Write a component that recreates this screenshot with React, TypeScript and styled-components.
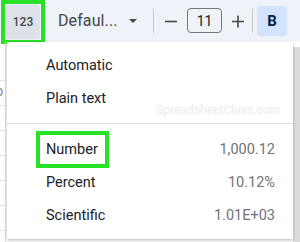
import React from "react";
import styled, { createGlobalStyle } from "styled-components";

const Global = createGlobalStyle`
  html, body { margin: 0; padding: 0; background: #ffffff; }
  body { font-family: Roboto, "Liberation Sans", Arial, sans-serif; }
`;

const Page = styled.div`
  position: relative;
  width: 300px;
  height: 242px;
  overflow: hidden;
  background: #ffffff;
`;

const Toolbar = styled.div`
  display: flex;
  align-items: center;
  height: 41px;
  background: #eef2f9;
  padding-left: 1px;
`;

const Highlight = styled.div`
  box-sizing: border-box;
  border: 4px solid #26e126;
  display: flex;
`;

const ToolHighlight = styled(Highlight)`
  margin-top: 2px;
  padding: 1px;
`;

const FormatBtn = styled.div`
  width: 34px;
  height: 34px;
  background: #dde2ea;
  border-radius: 3px;
  display: flex;
  align-items: center;
  justify-content: center;
  font-size: 12px;
  font-weight: 500;
  color: #444746;
`;

const FontSelect = styled.div`
  display: flex;
  align-items: center;
  margin-left: 13px;
  width: 95px;
  font-size: 16px;
  color: #444746;
  letter-spacing: 0.1px;
`;

const Caret = styled.span`
  margin-left: auto;
  width: 0;
  height: 0;
  border-left: 4px solid transparent;
  border-right: 4px solid transparent;
  border-top: 4px solid #444746;
  margin-right: 16px;
`;

const Sep = styled.div`
  width: 1px;
  height: 24px;
  background: #c7c7c7;
`;

const Step = styled.div<{ $lead?: number }>`
  width: 28px;
  margin-left: ${(p) => p.$lead ?? 0}px;
  display: flex;
  align-items: center;
  justify-content: center;
  color: #444746;
`;

const SizeBox = styled.div`
  box-sizing: border-box;
  width: 35px;
  height: 25px;
  border: 1px solid #747775;
  border-radius: 4px;
  display: flex;
  align-items: center;
  justify-content: center;
  font-size: 14px;
  color: #1f1f1f;
  margin: 0 2px;
`;

const BoldBtn = styled.div`
  margin-left: 4px;
  width: 30px;
  height: 30px;
  border-radius: 4px;
  background: #d3e3fd;
  display: flex;
  align-items: center;
  justify-content: center;
  font-weight: 700;
  font-size: 15px;
  color: #041e49;
`;

const Sheet = styled.div`
  display: flex;
  height: 201px;
`;

const RowHeaders = styled.div`
  width: 5px;
  border-right: 1px solid #e1e1e1;
  padding-top: 15px;
  display: flex;
  flex-direction: column;
`;

const SheetRow = styled.div`
  height: 24px;
  border-bottom: 1px solid #e1e1e1;
  font-size: 11px;
  color: #6d6d6d;
  line-height: 24px;
  overflow: hidden;
  text-indent: -4px;
`;

const Cells = styled.div`
  flex: 1;
`;

const ScrollStrip = styled.div`
  width: 7px;
  margin-top: 6px;
  background: #dcdcdc;
`;

const Menu = styled.div`
  position: absolute;
  left: 7px;
  top: 42px;
  width: 286px;
  height: 197px;
  box-sizing: border-box;
  background: #ffffff;
  box-shadow: 0 1px 3px rgba(0, 0, 0, 0.3);
  padding-top: 7px;
  display: flex;
  flex-direction: column;
`;

const Item = styled.div`
  height: 33px;
  display: flex;
  align-items: center;
  padding-left: 39px;
  padding-right: 18px;
  font-size: 14.5px;
  color: #202124;
`;

const NumberItem = styled(Item)`
  padding-left: 29px;
`;

const Value = styled.span`
  margin-left: auto;
  color: #6f7378;
  font-size: 14.5px;
`;

const Divider = styled.div`
  position: relative;
  height: 18px;
  display: flex;
  align-items: center;
`;

const Line = styled.div`
  width: 100%;
  height: 1px;
  margin-top: -1px;
  background: #dadce0;
`;

const Watermark = styled.span`
  position: absolute;
  right: 13px;
  top: -12px;
  font-size: 12px;
  font-weight: 500;
  color: #eeeef0;
`;

const NumberLabel = styled.span`
  padding: 0 7px 0 6px;
  line-height: 29px;
`;

const Minus = () => (
  <svg width="14" height="14" viewBox="0 0 14 14">
    <path d="M1 7.5h12" stroke="#444746" strokeWidth="1.6" />
  </svg>
);

const Plus = () => (
  <svg width="14" height="14" viewBox="0 0 14 14">
    <path d="M1 7.5h12M7 1.5v12" stroke="#444746" strokeWidth="1.6" />
  </svg>
);

export default function App() {
  return (
    <Page>
      <Global />
      <Toolbar>
        <ToolHighlight>
          <FormatBtn>123</FormatBtn>
        </ToolHighlight>
        <FontSelect>
          Defaul...
          <Caret />
        </FontSelect>
        <Sep />
        <Step $lead={3}>
          <Minus />
        </Step>
        <SizeBox>11</SizeBox>
        <Step>
          <Plus />
        </Step>
        <Sep />
        <BoldBtn>B</BoldBtn>
      </Toolbar>
      <Sheet>
        <RowHeaders>
          <SheetRow />
          <SheetRow>D</SheetRow>
          <SheetRow />
          <SheetRow />
          <SheetRow />
          <SheetRow />
          <SheetRow />
        </RowHeaders>
        <Cells />
        <ScrollStrip />
      </Sheet>
      <Menu>
        <Item>Automatic</Item>
        <Item>Plain text</Item>
        <Divider>
          <Watermark>SpreadsheetClass.com</Watermark>
          <Line />
        </Divider>
        <NumberItem>
          <Highlight>
            <NumberLabel>Number</NumberLabel>
          </Highlight>
          <Value>1,000.12</Value>
        </NumberItem>
        <Item>
          Percent
          <Value>10.12%</Value>
        </Item>
        <Item>
          Scientific
          <Value>1.01E+03</Value>
        </Item>
      </Menu>
    </Page>
  );
}
